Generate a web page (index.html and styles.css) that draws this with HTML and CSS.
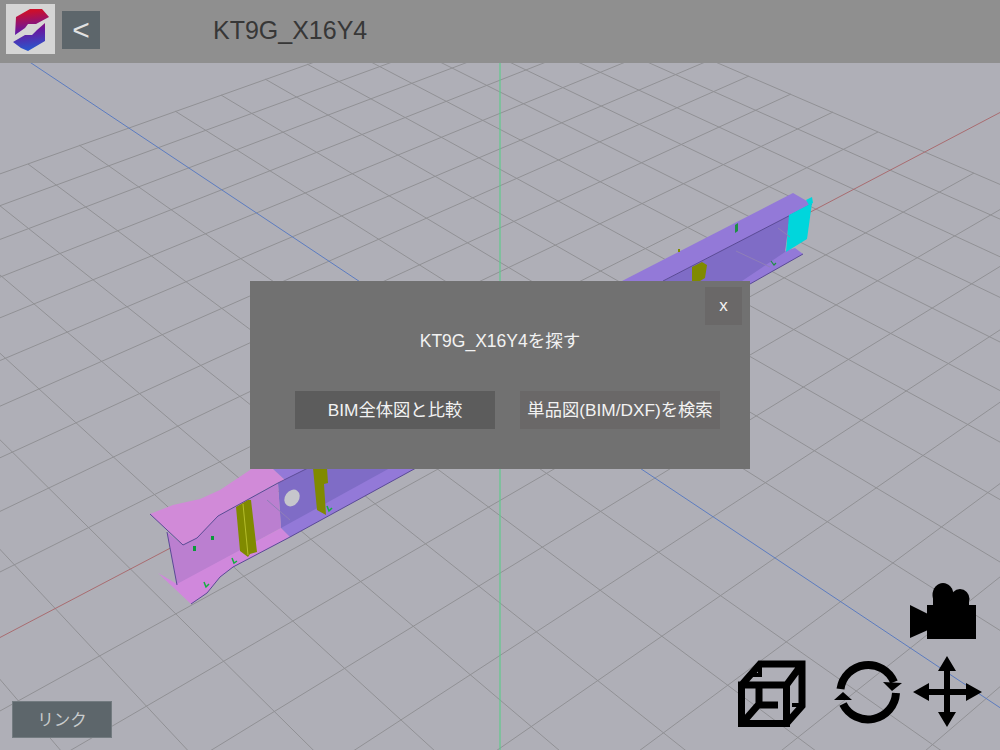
FILE: index.html
```html
<!DOCTYPE html>
<html lang="ja">
<head>
<meta charset="utf-8">
<title>KT9G_X16Y4</title>
<link rel="stylesheet" href="styles.css">
</head>
<body>
<main class="stage">
  <svg class="scene" viewBox="0 0 1000 750" width="1000" height="750" aria-hidden="true">
    <path class="grid" d="M-20 181L534-16M-20 213L567-2M-20 247L600 12M-20 285L635 27M-20 326L672 43M-20 369L710 60M-20 415L749 76M-20 467L791 94M-20 521L833 112M-20 582L878 132M-20 722L974 173M-20 803L1025 195M-20 892L1079 218M-20 994L1135 242M-20 1108L1194 268M-20 1239L1256 294M-20 1387L1321 322M-20 1562L1390 352"/>
    <path class="grid" d="M534-16L1020 193M499-4L1020 228M463 9L1020 266M426 22L1020 307M388 36L1020 352M348 50L1020 401M307 64L1020 453M265 79L1020 511M221 95L1020 574M175 111L1020 643M79 145L1020 806M28 164L1020 903M-25 186L1020 1016M-20 258L1020 1142M-20 335L1020 1286M-20 420L1020 1450M-20 528L1020 1641M-20 656L1020 1873"/>
    <path class="axis-red" d="M-20 648L1020 102"/>
    <path class="axis-blue" d="M-20 29L1020 721"/>
    <path class="axis-green" d="M500 0V750"/>

    <!-- far end of the beam -->
    <polygon class="flange-purple" points="803,254 795,248 785,251 735,281 750,284"/>
    <polygon class="web-purple" points="663,281 790,215 785,252 742,281"/>
    <polygon class="flange-purple" points="622,281 793,193 812,204 663,281"/>
    <path class="edge" d="M663 281L812 204M750 284L803 254"/>
    <polygon class="cyan" points="789,215 812,203 807,239 786,252"/>
    <polygon class="cyan" points="806,200 812,197 813,203 809,205"/>
    <polygon class="olive" points="692,267 702,262 707,265 705,278 700,281 692,281"/>
    <rect class="olive" x="678" y="249" width="2" height="3"/>
    <polygon class="stud" points="735,225 738,223 738,231 735,233"/>
    <path class="tick" d="M771 261L774 265L776 263"/>
    <path class="seen-line" d="M736 251L770 267M778 228L790 237"/>

    <!-- near end of the beam -->
    <polygon class="web-purple" points="278,483 308,468 392,468 290,537 281,528"/>
    <polygon class="web-pink" points="167,532 183,545 197,538 218,516 278,483 281,528 177,585"/>
    <polygon class="flange-purple" points="281,528 390,468 416,468 290,537"/>
    <polygon class="flange-pink" points="158,573 177,584 281,528 290,537 233,567 220,577 207,593 191,604"/>
    <polygon class="flange-pink-top" points="150,514 173,505 200,499 220,490 253,468 272,468 285,480 277,483 218,516 197,538 183,545"/>
    <polygon class="flange-purple" points="272,468 308,468 285,480"/>
    <path class="edge" d="M150 514L183 545L197 538L218 516L278 483L308 468M191 604L207 593L220 577L233 567L290 537L416 468M167 532L177 585"/>
    <ellipse class="hole" cx="292" cy="498" rx="7" ry="9" transform="rotate(35 292 498)"/>
    <polygon class="olive" points="313,468 327,468 328,483 324,484 326,515 317,510"/>
    <polygon class="olive" points="236,507 248,500 251,500 257,552 250,554 248,557 240,551"/>
    <path class="olive-light" d="M243 504L248 555"/>
    <rect class="stud-bright" x="193" y="546" width="3" height="5"/>
    <rect class="stud-bright" x="211" y="536" width="3" height="4"/>
    <path class="tick-bright" d="M204 582L206 587L209 584M232 558L234 563L237 561M327 506L329 511L332 508"/>
    <path class="seen-line" d="M267 500L290 520"/>
  </svg>

  <header class="topbar">
    <div class="logo">
      <svg viewBox="0 0 49 50" width="49" height="50" aria-hidden="true">
        <defs>
          <linearGradient id="logoFill" x1="0" y1="0" x2="0.1" y2="1">
            <stop offset="0.1" stop-color="#cc0f2c"/>
            <stop offset="0.55" stop-color="#6a169e"/>
            <stop offset="1" stop-color="#2a55cc"/>
          </linearGradient>
        </defs>
        <path fill="url(#logoFill)" d="M10 13L24 5H36L43 13L30 20H22L19 24L9 31ZM7 38L19 31H26L31 26L39 19V37L22 47L15 44Z"/>
      </svg>
    </div>
    <button class="back" type="button">&lt;</button>
    <h1 class="title">KT9G_X16Y4</h1>
  </header>

  <section class="modal">
    <button class="close" type="button">x</button>
    <p class="modal-title">KT9G_X16Y4を探す</p>
    <div class="modal-actions">
      <button class="action action-active" type="button">BIM全体図と比較</button>
      <button class="action" type="button">単品図(BIM/DXF)を検索</button>
    </div>
  </section>

  <button class="link" type="button">リンク</button>

  <div class="tools">
    <svg class="camera" viewBox="0 0 66 56" width="66" height="56" aria-hidden="true">
      <ellipse cx="33" cy="12" rx="10.5" ry="12"/>
      <ellipse cx="50" cy="16" rx="9.5" ry="10"/>
      <rect x="23" y="14" width="36" height="9"/>
      <rect x="17" y="22" width="49" height="34"/>
      <polygon points="0,22 18,31 18,47 0,55"/>
    </svg>
    <div class="tool-row">
      <svg class="cube" viewBox="738 660 68 68" width="68" height="68" aria-hidden="true">
        <path class="cube-line" d="M741.5 685H786.5V723.5H741.5ZM741.5 685L760 664H802V706L786.5 723.5M786.5 685L802 664M745 720L759 704M759 688V705H778"/>
        <path class="cube-stub" d="M752 675H760M760 666V677M792 705H801"/>
      </svg>
      <svg class="rotate" viewBox="834 658 70 70" width="70" height="70" aria-hidden="true">
        <path class="ring" d="M840.5 689A28 28 0 0 1 894 682M896 693A28 28 0 0 1 843 704"/>
        <polygon points="883,682 902,683 892,691"/>
        <polygon points="834,700 843,692 852,700"/>
      </svg>
      <svg class="move" viewBox="912 655 71 73" width="71" height="73" aria-hidden="true">
        <polygon points="947,656 956,671 950,671 950,689 966,689 966,683 982,692 966,701 966,695 950,695 950,712 956,712 947,727 938,712 944,712 944,695 929,695 929,701 913,692 929,683 929,689 944,689 944,671 938,671"/>
      </svg>
    </div>
  </div>
</main>
</body>
</html>
```

FILE: styles.css
```css
* { box-sizing: border-box; }

html, body {
  margin: 0;
  padding: 0;
}

body {
  font-family: "Liberation Sans", "Noto Sans CJK JP", sans-serif;
}

button {
  font: inherit;
  border: 0;
  padding: 0;
  cursor: pointer;
}

.stage {
  position: relative;
  width: 1000px;
  height: 750px;
  overflow: hidden;
  background: #afafb7;
}

.scene {
  position: absolute;
  inset: 0;
  display: block;
}

.grid { fill: none; stroke: #919195; stroke-width: 1; }
.axis-red { fill: none; stroke: #a96c70; stroke-width: 1; }
.axis-blue { fill: none; stroke: #5c7cc0; stroke-width: 1; }
.axis-green { fill: none; stroke: #5fc98c; stroke-width: 1.2; }

.flange-purple { fill: #9379d8; }
.web-purple { fill: #7f6cc6; }
.flange-pink { fill: #d088dc; }
.flange-pink-top { fill: #d18ad8; }
.web-pink { fill: #bb7fd0; }
.cyan { fill: #00d6dc; }
.olive { fill: #808a00; }
.olive-light { fill: none; stroke: #b4bd2a; stroke-width: 1; }
.stud { fill: #1f8f45; }
.stud-bright { fill: #0a9a3a; }
.tick { fill: none; stroke: #1f8f45; stroke-width: 1.2; }
.tick-bright { fill: none; stroke: #12b040; stroke-width: 1.5; }
.edge { fill: none; stroke: #5a4a96; stroke-width: 1; }
.seen-line { fill: none; stroke: #8f7fb8; stroke-width: 1; }
.hole { fill: #c6c6cc; }

.topbar {
  position: relative;
  display: flex;
  align-items: flex-start;
  height: 63px;
  padding-left: 6px;
  background: #8f8f8f;
}

.logo {
  width: 49px;
  height: 50px;
  margin-top: 4px;
  background: #d5d5d5;
}

.logo svg { display: block; }

.back {
  width: 38px;
  height: 38px;
  margin-top: 11px;
  margin-left: 7px;
  background: #5d666b;
  color: #e2e2e2;
  font-size: 30px;
  line-height: 36px;
  text-align: center;
}

.title {
  margin: 0 0 0 113px;
  font-size: 25px;
  font-weight: 400;
  line-height: 60px;
  color: #373737;
}

.modal {
  position: absolute;
  left: 250px;
  top: 281px;
  width: 500px;
  height: 188px;
  display: flex;
  flex-direction: column;
  align-items: center;
  background: #717171;
  color: #f2f2f2;
}

.close {
  position: absolute;
  top: 6px;
  right: 8px;
  width: 37px;
  height: 38px;
  background: #6a6868;
  color: #f5f5f5;
  font-size: 17px;
  line-height: 38px;
}

.modal-title {
  margin: 47px 0 0;
  font-size: 17.5px;
  line-height: 26px;
}

.modal-actions {
  display: flex;
  gap: 25px;
  margin-top: 37px;
  margin-left: 15px;
}

.action {
  width: 200px;
  height: 38px;
  background: #6a6868;
  color: #f2f2f2;
  font-size: 17.3px;
  line-height: 38px;
  white-space: nowrap;
}

.action-active { background: #5c5c5c; }

.link {
  position: absolute;
  left: 12px;
  bottom: 12px;
  width: 100px;
  height: 37px;
  background: #5d666b;
  border: 1px solid #737b80;
  color: #c9cccd;
  font-size: 16.5px;
  line-height: 34px;
}

.tools {
  position: absolute;
  right: 17px;
  top: 583px;
  display: flex;
  flex-direction: column;
  align-items: flex-end;
}

.tools svg { display: block; fill: #000; }

.camera { margin-right: 7px; }

.tool-row {
  display: flex;
  align-items: flex-start;
  margin-top: 16px;
}

.cube { margin-top: 5px; }
.rotate { margin-left: 28px; margin-top: 3px; }
.move { margin-left: 8px; }

.cube-line {
  fill: none;
  stroke: #000;
  stroke-width: 7;
  stroke-linejoin: miter;
}

.cube-stub {
  fill: none;
  stroke: #000;
  stroke-width: 4;
}

.ring {
  fill: none;
  stroke: #000;
  stroke-width: 8;
}
```
